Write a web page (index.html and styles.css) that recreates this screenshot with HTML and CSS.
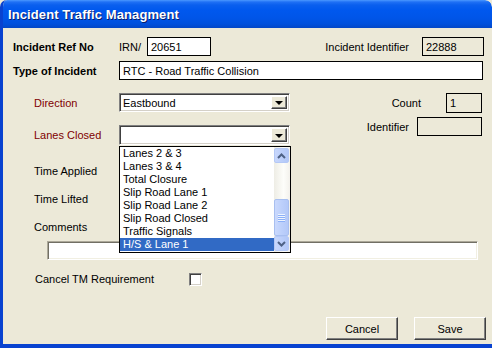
FILE: index.html
```html
<!DOCTYPE html>
<html>
<head>
<meta charset="utf-8">
<link rel="stylesheet" href="styles.css">
</head>
<body>
<div class="window">
  <div class="titlebar"><span class="title">Incident Traffic Managment</span></div>
  <div class="content">
    <div class="row r1">
      <span class="lbl bold">Incident Ref No</span>
      <span class="irn">IRN/</span>
      <span class="box refno">20651</span>
      <span class="spacer"></span>
      <span class="rlabel">Incident Identifier</span>
      <span class="box disabled incid">22888</span>
    </div>
    <div class="row r2">
      <span class="lbl bold">Type of Incident</span>
      <span class="box typebox">RTC - Road Traffic Collision</span>
    </div>
    <div class="section">
      <div class="leftcol">
        <div class="row r3">
          <span class="lbl red">Direction</span>
          <span class="select"><span class="seltext">Eastbound</span><span class="dropbtn"><i class="tri"></i></span></span>
        </div>
        <div class="row r4">
          <span class="lbl red">Lanes Closed</span>
          <span class="select lanes"><span class="seltext"></span><span class="dropbtn"><i class="tri"></i></span>
            <span class="droplist">
              <span class="items">
                <span class="item">Lanes 2 &amp; 3</span>
                <span class="item">Lanes 3 &amp; 4</span>
                <span class="item">Total Closure</span>
                <span class="item">Slip Road Lane 1</span>
                <span class="item">Slip Road Lane 2</span>
                <span class="item">Slip Road Closed</span>
                <span class="item">Traffic Signals</span>
                <span class="item sel">H/S &amp; Lane 1</span>
              </span>
              <span class="scrollbar">
                <span class="sbtn"><svg width="9" height="6" viewBox="0 0 9 6"><path d="M1 5 L4.5 1.5 L8 5" fill="none" stroke="#4D6185" stroke-width="2"/></svg></span>
                <span class="track"></span>
                <span class="thumb"><span class="grip"></span></span>
                <span class="sbtn"><svg width="9" height="6" viewBox="0 0 9 6"><path d="M1 1 L4.5 4.5 L8 1" fill="none" stroke="#4D6185" stroke-width="2"/></svg></span>
              </span>
            </span>
          </span>
        </div>
      </div>
      <div class="rightcol">
        <div class="row r3b">
          <span class="rlabel">Count</span>
          <span class="box disabled countbox">1</span>
        </div>
        <div class="row r4b">
          <span class="rlabel">Identifier</span>
          <span class="box disabled idbox"></span>
        </div>
      </div>
    </div>
    <div class="row r5"><span class="lbl">Time Applied</span></div>
    <div class="row r6"><span class="lbl">Time Lifted</span></div>
    <div class="row r7"><span class="lbl">Comments</span></div>
    <div class="row r8"><span class="sunken comments"></span></div>
    <div class="row r9">
      <span class="lbl cancellbl">Cancel TM Requirement</span>
      <span class="checkbox"></span>
    </div>
    <div class="row buttons">
      <span class="btn">Cancel</span>
      <span class="btn">Save</span>
    </div>
  </div>
</div>
</body>
</html>
```
FILE: styles.css
```css
* { box-sizing: border-box; }
html, body { margin: 0; padding: 0; }
body {
  width: 492px;
  height: 348px;
  overflow: hidden;
  font-family: "Liberation Sans", Arial, sans-serif;
  font-size: 11px;
  color: #000;
  background: #ECE9D8;
}
.window {
  width: 492px;
  height: 348px;
  display: flex;
  flex-direction: column;
  background: #ECE9D8;
  border-left: 3px solid #0842D0;
  border-bottom: 4px solid #0842D0;
  border-top-left-radius: 7px;
  border-top-right-radius: 7px;
  overflow: hidden;
}
.titlebar {
  height: 28px;
  margin-left: -3px;
  padding-left: 8px;
  display: flex;
  align-items: center;
  border-top-left-radius: 7px;
  border-top-right-radius: 7px;
  background: linear-gradient(to bottom, #4A98FF 0px, #1F70F5 2px, #0A5FEE 5px, #0058EE 10px, #0055E8 18px, #0050DC 24px, #0347C6 28px);
  flex: none;
}
.title {
  color: #fff;
  font-weight: bold;
  font-size: 13px;
  letter-spacing: 0.1px;
  text-shadow: 1px 1px 0 #0A1E6A;
  padding-top: 1px;
}
.content {
  display: flex;
  flex-direction: column;
  padding-left: 10px;
  width: 489px;
}
.row {
  display: flex;
  align-items: center;
}
.lbl { width: 106px; flex: none; }
.bold { font-weight: bold; }
.red { color: #800000; padding-left: 21px; }
.r5 .lbl, .r6 .lbl, .r7 .lbl { padding-left: 21px; }
.r1 { margin-top: 9px; height: 19px; }
.r2 { margin-top: 5px; height: 19px; }
.irn { width: 28px; }
.box {
  height: 19px;
  border: 1px solid #000;
  background: #fff;
  padding: 0 3px;
  display: flex;
  align-items: center;
  font-size: 11px;
}
.box.disabled { background: #ECE9D8; }
.refno { width: 64px; }
.spacer { flex: 1; }
.incid { width: 62px; margin-left: 13px; margin-right: 8px; }
.typebox { width: 364px; }
.section { display: flex; margin-top: 13px; }
.leftcol { display: flex; flex-direction: column; }
.rightcol { display: flex; flex-direction: column; flex: 1; align-items: flex-end; padding-right: 10px; }
.r3 { height: 19px; }
.r4 { margin-top: 13px; height: 20px; }
.r3b { height: 20px; }
.r3b .box { width: 36px; height: 20px; margin-left: 25px; }
.r4b { margin-top: 4px; height: 19px; }
.r4b .box { width: 65px; margin-left: 8px; }
.select {
  position: relative;
  width: 171px;
  height: 100%;
  background: #fff;
  border-top: 1px solid #808080;
  border-left: 1px solid #808080;
  border-right: 1px solid #fff;
  border-bottom: 1px solid #fff;
  box-shadow: inset 1px 1px 0 #404040, inset -1px -1px 0 #D4D0C8;
  display: flex;
  align-items: center;
  padding: 2px 2px 2px 3px;
}
.seltext { flex: 1; }
.dropbtn {
  width: 16px;
  height: 100%;
  background: #ECE9D8;
  border-top: 1px solid #fff;
  border-left: 1px solid #fff;
  border-right: 1px solid #404040;
  border-bottom: 1px solid #404040;
  box-shadow: inset -1px -1px 0 #808080;
  display: flex;
  align-items: center;
  justify-content: center;
}
.tri {
  width: 0; height: 0;
  border-left: 4px solid transparent;
  border-right: 4px solid transparent;
  border-top: 4px solid #000;
  margin-top: 1px;
}
.droplist {
  position: absolute;
  left: -1px;
  top: 20px;
  width: 172px;
  height: 107px;
  background: #fff;
  border: 1px solid #000;
  display: flex;
  z-index: 5;
}
.items { flex: 1; display: flex; flex-direction: column; }
.item {
  height: 13px;
  line-height: 13px;
  padding-left: 3px;
  font-size: 11px;
  white-space: nowrap;
}
.item.sel { background: #316AC5; color: #fff; }
.scrollbar {
  width: 16px;
  display: flex;
  flex-direction: column;
  background: linear-gradient(to right, #EEEDE5, #FDFDFA 60%, #F3F1EC);
  padding: 1px 1px 1px 0;
}
.sbtn {
  height: 15px;
  flex: none;
  border: 1px solid #B4C8F6;
  border-radius: 2px;
  background: linear-gradient(to right, #C8D7FC, #BCCFFA 50%, #B2C7F7);
  display: flex;
  align-items: center;
  justify-content: center;
}
.track { flex: 1; }
.thumb {
  height: 37px;
  flex: none;
  border: 1px solid #A8BFF0;
  border-radius: 2px;
  background: linear-gradient(to right, #CAD9FD, #BDD0FB 50%, #B3C8F8);
  display: flex;
  align-items: center;
  justify-content: center;
}
.grip {
  width: 7px;
  height: 8px;
  background: repeating-linear-gradient(to bottom, #EEF4FE 0, #EEF4FE 1px, #8CB0F8 1px, #8CB0F8 2px);
}
.r5 { margin-top: 16px; height: 20px; }
.r6 { margin-top: 8px; height: 20px; }
.r7 { margin-top: 8px; height: 20px; }
.r8 { margin-top: 4px; height: 19px; }
.sunken {
  background: #fff;
  border-top: 1px solid #ACA899;
  border-left: 1px solid #ACA899;
  border-right: 1px solid #fff;
  border-bottom: 1px solid #fff;
  box-shadow: inset 1px 1px 0 #716F64, inset -1px -1px 0 #F1EFE2;
}
.comments { width: 431px; height: 19px; margin-left: 34px; }
.r9 { margin-top: 9px; height: 20px; }
.cancellbl { width: 176px; padding-left: 22px; }
.checkbox {
  width: 13px;
  height: 13px;
  background: #fff;
  border-top: 1px solid #808080;
  border-left: 1px solid #808080;
  border-right: 1px solid #fff;
  border-bottom: 1px solid #fff;
  box-shadow: inset 1px 1px 0 #404040, inset -1px -1px 0 #D4D0C8;
}
.buttons {
  margin-top: 28px;
  height: 23px;
  justify-content: flex-end;
  gap: 16px;
  padding-right: 6px;
}
.btn {
  width: 72px;
  height: 23px;
  display: flex;
  align-items: center;
  justify-content: center;
  background: #ECE9D8;
  border-top: 1px solid #fff;
  border-left: 1px solid #fff;
  border-right: 1px solid #404040;
  border-bottom: 1px solid #404040;
  box-shadow: inset -1px -1px 0 #808080;
  font-size: 11px;
}
```
